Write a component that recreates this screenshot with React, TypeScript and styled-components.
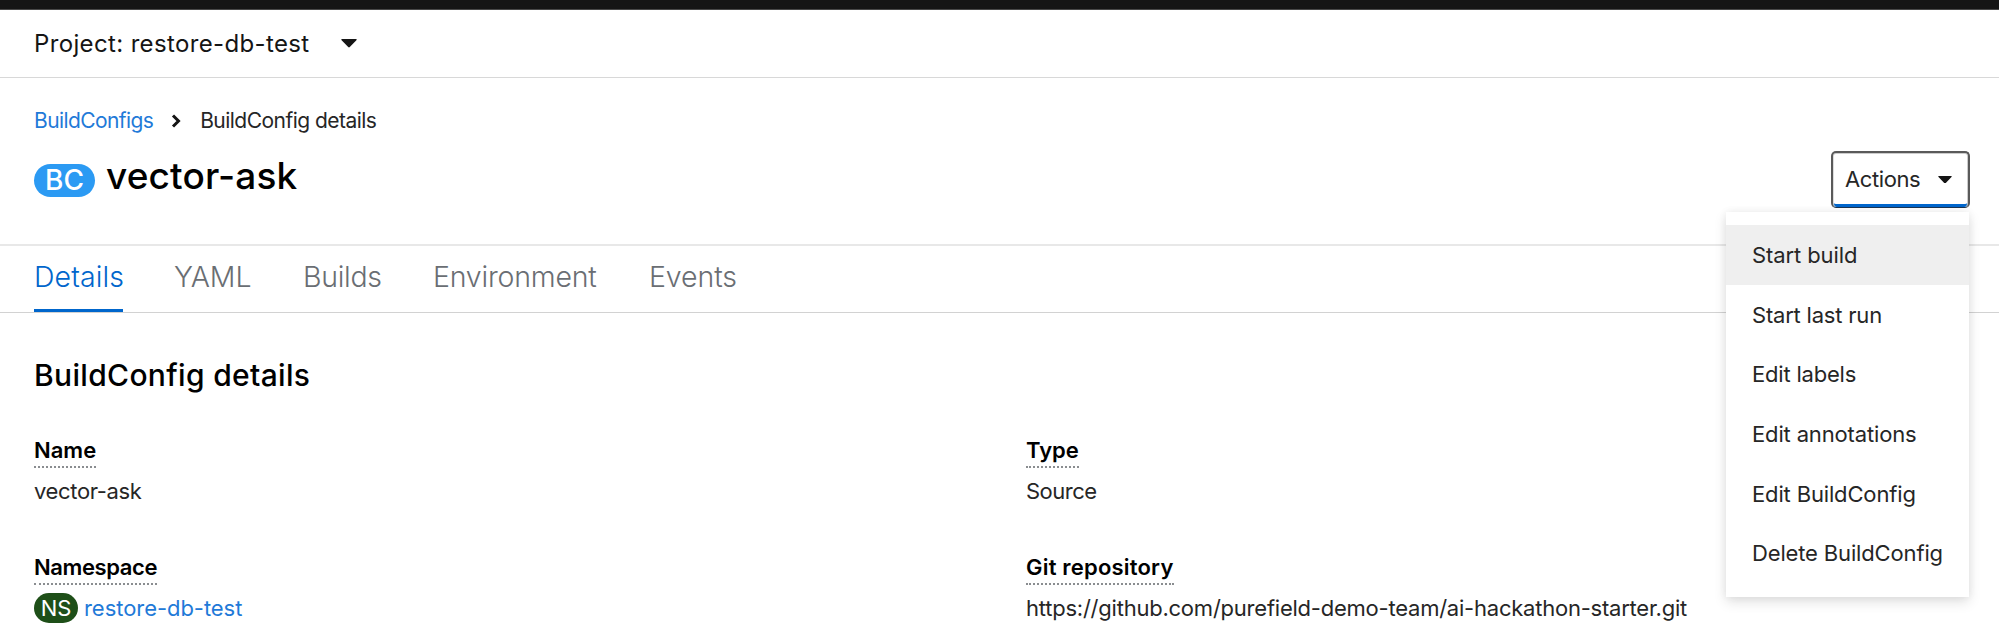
import React from "react";
import styled, { createGlobalStyle } from "styled-components";

const GlobalStyle = createGlobalStyle`
  *, *::before, *::after { box-sizing: border-box; }
  body {
    margin: 0;
    background: #fff;
    color: #262626;
    font-family: Inter, "Liberation Sans", sans-serif;
    font-size: 22px;
    overflow: hidden;
  }
`;

const Page = styled.div`
  height: 626px;
  overflow: hidden;
  display: flex;
  flex-direction: column;
`;

const Masthead = styled.div`
  flex: none;
  height: 10px;
  background: #151515;
  border-bottom: 1px solid #484848;
`;

const ProjectBar = styled.div`
  flex: none;
  height: 68px;
  padding: 0 34px;
  display: flex;
  align-items: center;
  gap: 31px;
  border-bottom: 1px solid #d8d8d8;
`;

const Label = styled.span<{ $track?: number }>`
  letter-spacing: ${(p) => p.$track ?? 0}px;
  white-space: nowrap;
`;

const ProjectName = styled(Label)`
  color: #151515;
  font-size: 24px;
  line-height: 30px;
`;

const Header = styled.header`
  flex: none;
  height: 168px;
  padding: 28px 29px 0 34px;
  border-bottom: 2px solid #e8e8e8;
`;

const Breadcrumb = styled.nav`
  display: flex;
  align-items: center;
  height: 30px;
  font-size: 21px;
  line-height: 30px;
`;

const Link = styled.a<{ $track?: number }>`
  color: #1f7ad8;
  letter-spacing: ${(p) => p.$track ?? 0}px;
  text-decoration: none;
  white-space: nowrap;
`;

const Chevron = styled.svg`
  width: 10px;
  height: 14px;
  margin: 0 19px 0 18px;
`;

const TitleRow = styled.div`
  display: flex;
  justify-content: space-between;
  align-items: flex-start;
`;

const Title = styled.h1`
  margin: 17px 0 0;
  display: flex;
  align-items: flex-start;
  gap: 11px;
  color: #000;
  font-size: 37px;
  font-weight: 500;
  line-height: 46px;
`;

const Badge = styled.span<{ $tone: string; $large?: boolean }>`
  display: flex;
  align-items: center;
  justify-content: center;
  width: ${(p) => (p.$large ? 61 : 44)}px;
  height: ${(p) => (p.$large ? 33 : 30)}px;
  margin-top: ${(p) => (p.$large ? 11 : 0)}px;
  padding-bottom: ${(p) => (p.$large ? 1 : 0)}px;
  border-radius: 17px;
  background: ${(p) => p.$tone};
  color: #fff;
  font-size: ${(p) => (p.$large ? 28 : 22)}px;
  font-weight: ${(p) => (p.$large ? 500 : 400)};
  line-height: 30px;
`;

const ActionsWrap = styled.div`
  position: relative;
  margin-top: 15px;
`;

const ActionsToggle = styled.button`
  display: flex;
  align-items: center;
  justify-content: space-between;
  width: 139px;
  height: 57px;
  padding: 0 16px 3px 12px;
  border: 2px solid #5a5a5a;
  border-bottom: 1px solid #1d3550;
  border-radius: 5px;
  background: #fff;
  box-shadow: inset 0 1px 0 #ccc, inset 1px 0 0 #ddd, inset -1px 0 0 #ccc,
    inset 0 -3px 0 #06c;
  color: #262626;
  font: inherit;
`;

const Caret = styled.svg<{ $size: number; $drop?: number }>`
  width: ${(p) => p.$size}px;
  height: ${(p) => p.$size * 0.55}px;
  margin-top: ${(p) => p.$drop ?? 0}px;
`;

const Menu = styled.ul`
  position: absolute;
  top: 61px;
  right: 1px;
  z-index: 2;
  width: 243px;
  height: 385px;
  margin: 0;
  padding: 13px 0;
  list-style: none;
  background: #fff;
  box-shadow: 0 5px 12px rgba(3, 3, 3, 0.12), 0 0 8px rgba(3, 3, 3, 0.06);
`;

const MenuItem = styled.li<{ $active?: boolean; $track: number }>`
  height: 59.7px;
  padding-left: 26px;
  background: ${(p) => (p.$active ? "#efefef" : "transparent")};
  letter-spacing: ${(p) => p.$track}px;
  line-height: 60px;
  white-space: nowrap;
`;

const Tabs = styled.nav`
  flex: none;
  height: 67px;
  padding-left: 34px;
  display: flex;
  gap: 51px;
  border-bottom: 1px solid #d2d2d2;
`;

const Tab = styled.a<{ $current?: boolean; $width: number; $track: number }>`
  width: ${(p) => p.$width}px;
  padding-top: 11px;
  border-bottom: 3px solid ${(p) => (p.$current ? "#06c" : "transparent")};
  color: ${(p) => (p.$current ? "#06c" : "#6a6e73")};
  font-size: 28.5px;
  font-weight: 300;
  letter-spacing: ${(p) => p.$track}px;
  line-height: 40px;
  white-space: nowrap;
`;

const Content = styled.main`
  padding: 42px 34px 0;
`;

const SectionTitle = styled.h2`
  margin: 0;
  color: #000;
  font-size: 30px;
  font-weight: 500;
  letter-spacing: 0.33px;
  line-height: 40px;
`;

const Columns = styled.dl`
  display: grid;
  grid-template-columns: 992px 1fr;
  row-gap: 46px;
  margin: 40px 0 0;
`;

const Term = styled.dt<{ $track: number }>`
  display: table;
  height: 33px;
  color: #000;
  font-weight: 600;
  letter-spacing: ${(p) => p.$track}px;
  line-height: 30px;
  border-bottom: 2px dotted #8a8d90;
`;

const Value = styled.dd`
  display: flex;
  align-items: center;
  gap: 6px;
  height: 30px;
  margin: 8px 0 0;
  line-height: 30px;
`;

const actions = [
  { label: "Start build", track: -0.1 },
  { label: "Start last run", track: -0.2 },
  { label: "Edit labels", track: -0.2 },
  { label: "Edit annotations", track: -0.15 },
  { label: "Edit BuildConfig", track: -0.15 },
  { label: "Delete BuildConfig", track: -0.15 },
];

const tabs = [
  { label: "Details", width: 89, track: 0.1 },
  { label: "YAML", width: 78, track: -0.1 },
  { label: "Builds", width: 79, track: -0.3 },
  { label: "Environment", width: 165, track: -0.2 },
  { label: "Events", width: 90, track: -0.1 },
];

function CaretDown({ size, drop }: { size: number; drop?: number }) {
  return (
    <Caret $size={size} $drop={drop} viewBox="0 0 16 9" preserveAspectRatio="none">
      <path d="M1 0H15Q16.3 .3 15.4 1.3L8.8 8.3Q8 9.2 7.2 8.3L.6 1.3Q-.3 .3 1 0Z" fill="#151515" />
    </Caret>
  );
}

export default function App() {
  return (
    <Page>
      <GlobalStyle />
      <Masthead />
      <ProjectBar>
        <ProjectName $track={0.36}>Project: restore-db-test</ProjectName>
        <CaretDown size={16} />
      </ProjectBar>
      <Header>
        <Breadcrumb>
          <Link $track={-0.6}>BuildConfigs</Link>
          <Chevron viewBox="0 0 10 14">
            <path d="M2 1.5 7.5 7 2 12.5" fill="none" stroke="#151515" strokeWidth="3" />
          </Chevron>
          <Label $track={-0.53}>BuildConfig details</Label>
        </Breadcrumb>
        <TitleRow>
          <Title>
            <Badge $tone="#2b9af3" $large>BC</Badge>
            <Label $track={0.15}>vector-ask</Label>
          </Title>
          <ActionsWrap>
            <ActionsToggle type="button">
              <Label $track={-0.4}>Actions</Label>
              <CaretDown size={14} drop={2} />
            </ActionsToggle>
            <Menu>
              {actions.map((a, i) => (
                <MenuItem key={a.label} $active={i === 0} $track={a.track}>
                  {a.label}
                </MenuItem>
              ))}
            </Menu>
          </ActionsWrap>
        </TitleRow>
      </Header>
      <Tabs>
        {tabs.map((t, i) => (
          <Tab key={t.label} $current={i === 0} $width={t.width} $track={t.track}>
            {t.label}
          </Tab>
        ))}
      </Tabs>
      <Content>
        <SectionTitle>BuildConfig details</SectionTitle>
        <Columns>
          <div>
            <Term $track={0}>Name</Term>
            <Value>
              <Label $track={-0.35}>vector-ask</Label>
            </Value>
          </div>
          <div>
            <Term $track={0}>Type</Term>
            <Value>
              <Label $track={-0.5}>Source</Label>
            </Value>
          </div>
          <div>
            <Term $track={-0.4}>Namespace</Term>
            <Value>
              <Badge $tone="#1e4f18">NS</Badge>
              <Link $track={-0.05}>restore-db-test</Link>
            </Value>
          </div>
          <div>
            <Term $track={0.2}>Git repository</Term>
            <Value>
              <Label $track={-0.23}>https://github.com/purefield-demo-team/ai-hackathon-starter.git</Label>
            </Value>
          </div>
        </Columns>
      </Content>
    </Page>
  );
}
